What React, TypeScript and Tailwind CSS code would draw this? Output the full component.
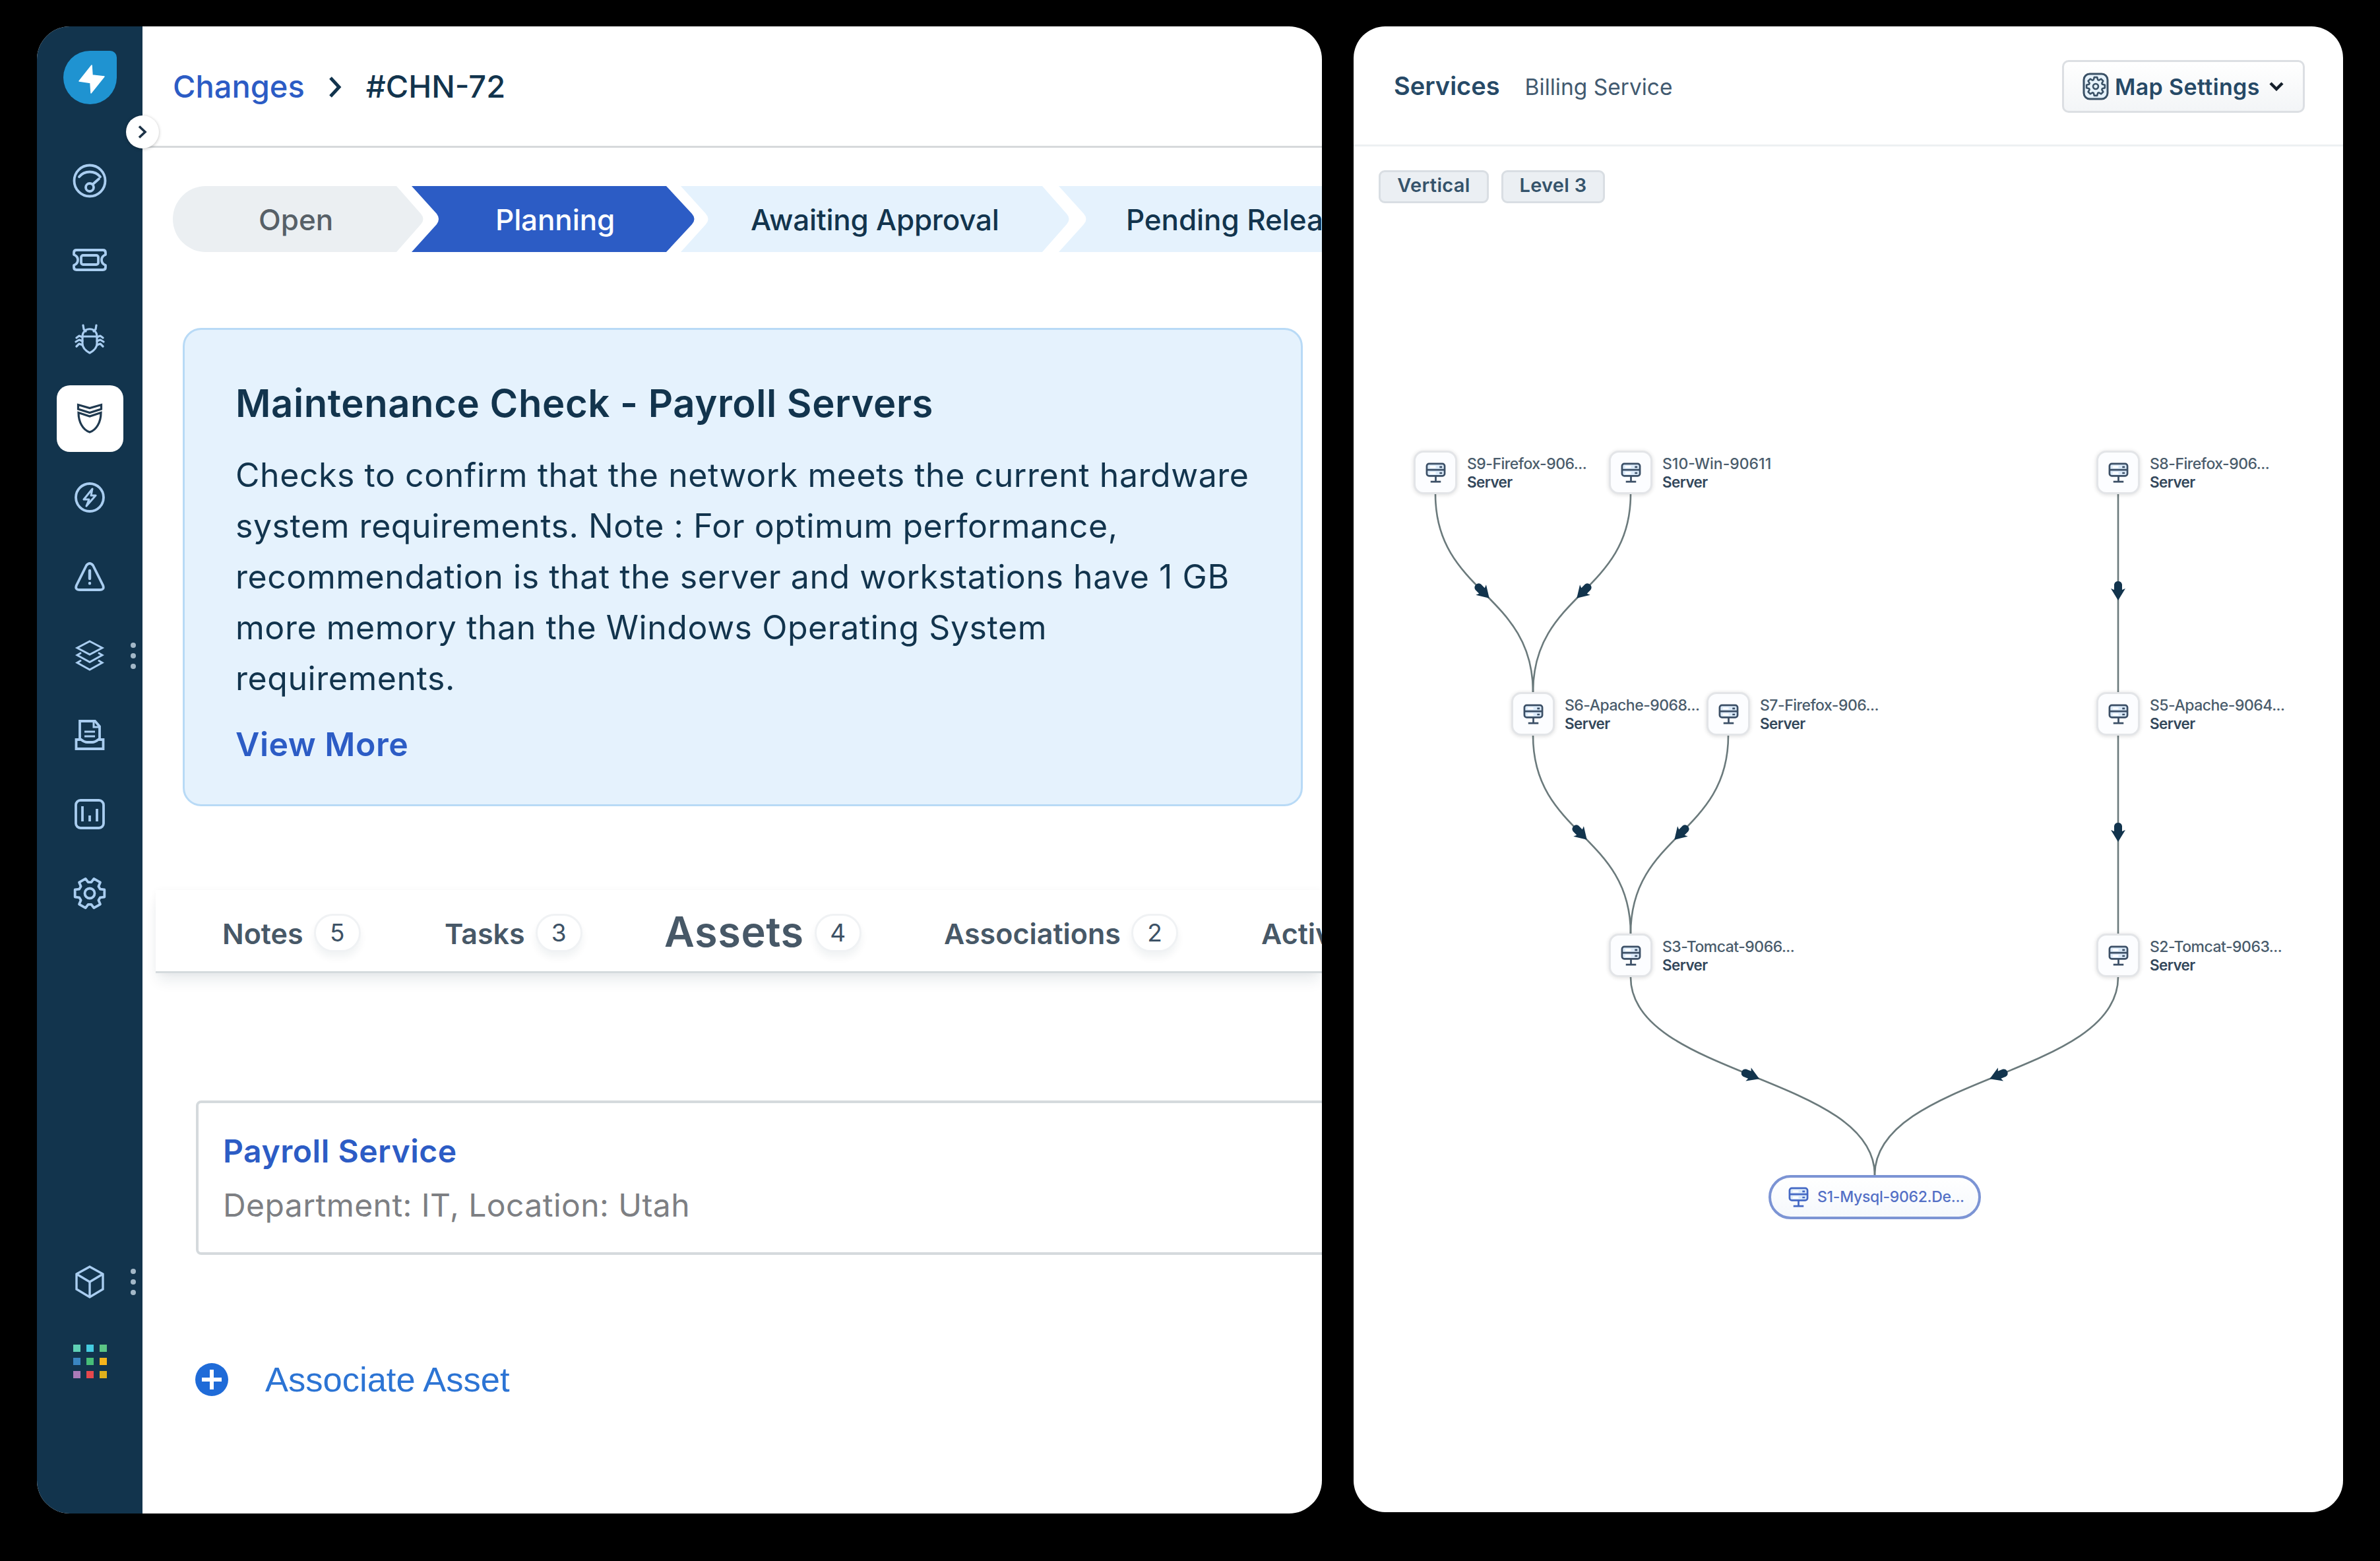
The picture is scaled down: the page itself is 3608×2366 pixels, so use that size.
// src/App.tsx

import React from 'react';

type IconProps = {
  children: React.ReactNode;
  size?: number;
  className?: string;
};

// All line icons are drawn around the origin of a 60x60 box
function Icon({ children, size = 60, className = 'stroke-[#a9cdf0]' }: IconProps) {
  return (
    <svg
      width={size}
      height={size}
      viewBox="-30 -30 60 60"
      fill="none"
      strokeWidth={3.8}
      strokeLinecap="round"
      strokeLinejoin="round"
      className={className}
    >
      {children}
    </svg>
  );
}

function gearPath(teeth: number, outer: number, inner: number, top: number, base: number) {
  const step = 360 / teeth;
  const point = (r: number, deg: number) => {
    const a = (deg * Math.PI) / 180;
    return `${(r * Math.cos(a)).toFixed(2)} ${(r * Math.sin(a)).toFixed(2)}`;
  };
  let d = '';
  for (let i = 0; i < teeth; i++) {
    const a = i * step;
    d += `${i === 0 ? 'M' : 'L'}${point(inner, a - base)}L${point(outer, a - top)}L${point(outer, a + top)}L${point(inner, a + base)}`;
  }
  return d + 'Z';
}

const navItems = [
  {
    name: 'dashboard',
    icon: (
      <>
        <circle r="23.5" />
        <path d="M-16 -6C-8 -16 8 -16 16 -6" />
        <circle cy="10" r="6" />
        <path d="M5 5L14 -3" />
      </>
    ),
  },
  {
    name: 'tickets',
    icon: (
      <>
        <path d="M-20 -15H20Q24 -15 24 -11V-8C16 -5 16 5 24 8V11Q24 15 20 15H-20Q-24 15 -24 11V8C-16 5 -16 -5 -24 -8V-11Q-24 -15 -20 -15Z" />
        <rect x="-13" y="-7" width="26" height="14" rx="3" />
      </>
    ),
  },
  {
    name: 'problems',
    icon: (
      <g strokeWidth="3.2">
        <path d="M-11 -4H11V7Q11 15 0 21Q-11 15 -11 7Z" />
        <path d="M-11 -4C-11 -19 11 -19 11 -4M-10 -21L-9 -15L-6 -12M10 -21L9 -15L6 -12" />
        <path d="M-11 -3L-16 -5L-20 -2M-11 3L-16 1L-21 4M-11 9L-16 7L-20 11" />
        <path d="M11 -3L16 -5L20 -2M11 3L16 1L21 4M11 9L16 7L20 11" />
      </g>
    ),
  },
  {
    name: 'changes',
    active: true,
    icon: (
      <g strokeWidth="3.2" strokeLinejoin="miter">
        <path d="M-17.5 -20.5L0 -15.5L17.5 -20.5V-14L0 -8.5L-17.5 -14Z" />
        <path d="M-17 -8.5L0 -3L17 -8.5C17 6 10 18 0 21C-10 18 -17 6 -17 -8.5Z" />
      </g>
    ),
  },
  {
    name: 'releases',
    icon: (
      <>
        <circle r="21" />
        <path d="M4 -13L-9 3H-1L-5 13L9 -3H2Z" strokeWidth="3" />
      </>
    ),
  },
  {
    name: 'alerts',
    icon: (
      <>
        <path d="M-5 -17Q0 -23 5 -17L20 13Q23 20 15 20H-15Q-23 20 -20 13Z" />
        <path d="M0 -9V3M0 10V10.2" strokeWidth="4.4" />
      </>
    ),
  },
  {
    name: 'assets',
    more: true,
    icon: (
      <g strokeWidth="3" strokeLinejoin="miter">
        <path d="M0 -22L19 -12L0 -2L-19 -12Z" />
        <path d="M-14 -4L-19 -1L0 9.5L19 -1L14 -4" />
        <path d="M-14 7.5L-19 10.5L0 21L19 10.5L14 7.5" />
      </g>
    ),
  },
  {
    name: 'purchase',
    icon: (
      <g strokeLinejoin="miter" strokeLinecap="butt">
        <path d="M-15 7V-21H8L15 -13V7" />
        <path d="M6 -21V-12H15" strokeWidth="3" />
        <path d="M-8 -5H8M-8 2H8" strokeWidth="3" />
        <path d="M-13 7H-20.5V21H20.5V7H13Q8 11 4 11H-4Q-8 11 -13 7Z" />
      </g>
    ),
  },
  {
    name: 'analytics',
    icon: (
      <>
        <rect x="-21" y="-21" width="42" height="42" rx="7" />
        <path d="M-11 -12V11M0 2V11M11 -8V11" strokeLinecap="butt" />
      </>
    ),
  },
  {
    name: 'admin',
    icon: (
      <>
        <path d={gearPath(6, 23, 17, 14, 22)} />
        <circle r="7.5" />
      </>
    ),
  },
];

const appColors = [
  'bg-[#5fd0b5]', 'bg-[#45cbe0]', 'bg-[#5cc585]',
  'bg-[#3a85c0]', 'bg-[#47bd78]', 'bg-[#f4b31b]',
  'bg-[#a97bb8]', 'bg-[#e5484d]', 'bg-[#dfb01c]',
];

function MoreDots() {
  return (
    <span className="absolute right-[10px] top-[40px] flex flex-col gap-[8px]">
      <i className="size-[8px] rounded-full bg-[#a3b8c8]" />
      <i className="size-[8px] rounded-full bg-[#a3b8c8]" />
      <i className="size-[8px] rounded-full bg-[#a3b8c8]" />
    </span>
  );
}

function Sidebar() {
  return (
    <aside className="flex w-[160px] shrink-0 flex-col items-center bg-[#12344d] pt-[37px]">
      <div className="size-[81px] rounded-[41px] rounded-tr-[10px] bg-[#1f93d1]">
        <svg viewBox="0 0 81 81" className="size-full fill-white">
          <path d="M43 22L24 46L41 48.5L42 64L62 39L44 37Z" stroke="#fff" strokeLinejoin="round" strokeWidth="1.5" />
        </svg>
      </div>
      <nav className="mt-[56px] flex w-full flex-col">
        {navItems.map((item) => (
          <a key={item.name} className="relative flex h-[120px] items-center justify-center">
            {item.active ? (
              <span className="flex size-[101px] items-center justify-center rounded-[20px] bg-white">
                <Icon className="stroke-[#203a50]">{item.icon}</Icon>
              </span>
            ) : (
              <Icon>{item.icon}</Icon>
            )}
            {item.more && <MoreDots />}
          </a>
        ))}
      </nav>
      <div className="relative mt-[469px] flex h-[120px] w-full items-center justify-center">
        <Icon>
          <path
            d="M0 -23L20 -12V11L0 23L-20 11V-12ZM-20 -12L0 0L20 -12M0 0V23"
            strokeWidth="3.4"
            strokeLinejoin="miter"
          />
        </Icon>
        <MoreDots />
      </div>
      <div className="flex h-[120px] items-center">
        <div className="grid grid-cols-3 gap-[9px]">
          {appColors.map((color) => (
            <i key={color} className={`size-[11px] ${color}`} />
          ))}
        </div>
      </div>
    </aside>
  );
}

function Stepper() {
  return (
    <div className="ml-[46px] mt-[58px] flex h-[100px] text-[44px] font-medium leading-[102px] whitespace-nowrap text-[#12344d]">
      <div className="w-[381px] shrink-0 bg-[#ebeff2] pl-[130px] text-[#576067] [clip-path:path('M50_0H339L376_42Q383_50_376_58L339_100H50A50_50_0_0_1_50_0Z')]">
        Open
      </div>
      <div className="-ml-[19px] w-[430px] shrink-0 bg-[#2c5cc5] pl-[127px] tracking-[-0.1px] text-white [clip-path:path('M0_0H386L425_42Q432_50_425_58L386_100H0L38_58Q44_50_38_42Z')]">
        Planning
      </div>
      <div className="-ml-[22px] w-[590px] shrink-0 bg-[#e5f2fd] pl-[106px] tracking-[-0.25px] [clip-path:path('M0_0H548L585_42Q592_50_585_58L548_100H0L38_58Q45_50_38_42Z')]">
        Awaiting Approval
      </div>
      <div className="-ml-[17px] w-[590px] shrink-0 bg-[#e5f2fd] pl-[102px] tracking-[-0.1px] [clip-path:path('M0_0H590V100H0L38_58Q45_50_38_42Z')]">
        Pending Release
      </div>
    </div>
  );
}

type TabProps = {
  label: string;
  count?: number;
  className: string;
  active?: boolean;
};

function Tab({ label, count, className, active }: TabProps) {
  return (
    <div className={`flex shrink-0 items-center gap-[16px] text-[#475867] ${className}`}>
      <span
        className={
          active
            ? 'pb-[3px] text-[63px] font-semibold leading-[67px] tracking-[0.6px]'
            : 'pt-[3px] text-[43px] font-semibold leading-[60px]'
        }
      >
        {label}
      </span>
      {count !== undefined && (
        <span className="flex h-[58px] w-[71px] items-center justify-center rounded-full border-[3px] border-[#f0f2f4] bg-white text-[37px] text-[#3d5266] shadow-[0_8px_12px_rgba(24,50,71,0.06)]">
          {count}
        </span>
      )}
    </div>
  );
}

function ChangePanel() {
  return (
    <section className="relative flex h-[2254px] w-[1948px] shrink-0 overflow-hidden rounded-[50px] bg-white">
      <Sidebar />
      <main className="w-[1788px] shrink-0 overflow-hidden">
        <header className="flex h-[184px] items-center border-b-[3px] border-[#d6d9db] pl-[46px] pt-[2px] text-[47px] font-medium">
          <a className="text-[#2c5cc5]">Changes</a>
          <svg viewBox="0 0 20 32" className="ml-[36px] mr-[37px] h-[32px] w-[20px]" fill="none" stroke="#12344d" strokeWidth="5">
            <path d="M3 2L16 16L3 30" />
          </svg>
          <span className="text-[#12344d]">#CHN-72</span>
        </header>

        <Stepper />

        <article className="ml-[61px] mt-[115px] h-[725px] w-[1698px] rounded-[28px] border-[3px] border-[#b8daf6] bg-[#e5f2fd] pl-[77px] pt-[71px] text-[#12344d]">
          <h1 className="text-[58px] font-semibold leading-[80px] tracking-[0.58px]">Maintenance Check - Payroll Servers</h1>
          <p className="mt-[31px] text-[50px] leading-[77px] tracking-[0.55px] whitespace-nowrap">
            Checks to confirm that the network meets the current hardware<br />
            system requirements. Note : For optimum performance,<br />
            recommendation is that the server and workstations have 1 GB<br />
            more memory than the Windows Operating System<br />
            requirements.
          </p>
          <a className="mt-[31px] block text-[50px] font-semibold leading-[60px] tracking-[0.5px] text-[#2c5cc5]">View More</a>
        </article>

        <div className="ml-[20px] mt-[127px] flex h-[126px] items-center border-b-[3px] border-[#d5dadd] bg-white pl-[101px] pt-[6px] whitespace-nowrap shadow-[0_14px_20px_-4px_rgba(24,50,71,0.1),0_0_10px_rgba(24,50,71,0.03)]">
          <Tab label="Notes" count={5} className="w-[337px]" />
          <Tab label="Tasks" count={3} className="w-[333px]" />
          <Tab label="Assets" count={4} className="w-[424px]" active />
          <Tab label="Associations" count={2} className="w-[481px]" />
          <Tab label="Activities" className="w-[300px]" />
        </div>

        <div className="ml-[81px] mt-[193px] h-[234px] w-[1900px] rounded-[8px] border-[4px] border-[#d5dadd] pl-[37px] pt-[43px]">
          <div className="text-[48px] font-semibold leading-[60px] tracking-[0.55px] text-[#2c5cc5]">Payroll Service</div>
          <div className="mt-[22px] text-[48px] leading-[60px] tracking-[0.45px] text-[#7d7f83]">Department: IT, Location: Utah</div>
        </div>

        <button className="ml-[80px] mt-[164px] flex items-center gap-[56px]">
          <svg viewBox="0 0 50 50" className="size-[50px]">
            <circle cx="25" cy="25" r="25" fill="#1f6bd8" />
            <path d="M25 10V40M10 25H40" stroke="#fff" strokeWidth="6" />
          </svg>
          <span className="font-['Liberation_Sans',Arial,sans-serif] text-[52.5px] leading-[50px] text-[#2c74d4]">Associate Asset</span>
        </button>
      </main>

      {/* sidebar toggle sits over the sidebar edge */}
      <button className="absolute left-[135px] top-[135px] flex size-[50px] items-center justify-center rounded-full bg-white shadow-[0_1px_5px_rgba(0,0,0,0.25)]">
        <svg viewBox="0 0 14 20" className="h-[20px] w-[14px]" fill="none" stroke="#1d3347" strokeWidth="3.6">
          <path d="M2 1.5L11 10L2 18.5" />
        </svg>
      </button>
    </section>
  );
}

type ServerNode = { id: string; x: number; y: number; label: string };

// coordinates are relative to the map canvas
const nodes: ServerNode[] = [
  { id: 'S9', x: 124, y: 408, label: 'S9-Firefox-906...' },
  { id: 'S10', x: 420, y: 408, label: 'S10-Win-90611' },
  { id: 'S8', x: 1159, y: 408, label: 'S8-Firefox-906...' },
  { id: 'S6', x: 272, y: 774, label: 'S6-Apache-9068...' },
  { id: 'S7', x: 568, y: 774, label: 'S7-Firefox-906...' },
  { id: 'S5', x: 1159, y: 774, label: 'S5-Apache-9064...' },
  { id: 'S3', x: 420, y: 1140, label: 'S3-Tomcat-9066...' },
  { id: 'S2', x: 1159, y: 1140, label: 'S2-Tomcat-9063...' },
];

const edges = [
  [124, 408, 272],
  [420, 408, 272],
  [1159, 408, 1159],
  [272, 774, 420],
  [568, 774, 420],
  [1159, 774, 1159],
  [420, 1140, 790],
  [1159, 1140, 790],
];

function ServerIcon({ color, className }: { color: string; className: string }) {
  return (
    <svg viewBox="0 0 32 32" className={className} fill="none" stroke={color} strokeWidth="2.8">
      <rect x="2" y="2" width="28" height="19" rx="3.5" fill="#dcebfa" />
      <path d="M2 11.5H30M16 21V30M8 30H24" />
      <path d="M7 7H16M7 16.5H16" stroke="#fff" strokeWidth="3" />
      <path d="M22 7H26M22 16.5H26" />
    </svg>
  );
}

function Edge({ x1, y, x2 }: { x1: number; y: number; x2: number }) {
  const y1 = y + 33;
  const y2 = y + 333;
  const mid = (y1 + y2) / 2;
  const angle = (Math.atan2(mid - y1, x2 - x1) * 180) / Math.PI;
  return (
    <g>
      <path d={`M${x1} ${y1}C${x1} ${mid} ${x2} ${mid} ${x2} ${y2}`} fill="none" stroke="#6b7a7c" strokeWidth="2.6" />
      <path
        d="M11 0L-7 11L-5 6H-13Q-18 5 -18 0Q-18 -5 -13 -6H-5L-7 -11Z"
        fill="#12344d"
        transform={`translate(${(x1 + x2) / 2} ${mid}) rotate(${angle})`}
      />
    </g>
  );
}

function NodeItem({ node }: { node: ServerNode }) {
  const truncated = node.label.endsWith('...');
  return (
    <div className="absolute flex gap-[15px]" style={{ left: node.x - 33, top: node.y - 33 }}>
      <div className="flex size-[66px] items-center justify-center rounded-[15px] border-[3px] border-[#e3e5e8] bg-[#fcfdff] shadow-[0_1px_6px_rgba(0,0,0,0.14)]">
        <ServerIcon color="#3b4f66" className="size-[31px]" />
      </div>
      <div className="pt-[6px] text-[23px] font-medium leading-[28px] whitespace-nowrap text-[#4a5c6c]">
        <div className={truncated ? 'tracking-[-0.5px]' : ''}>{node.label}</div>
        <div className="text-[22.5px] font-semibold tracking-[-0.6px] text-[#33475b]">Server</div>
      </div>
    </div>
  );
}

function MapPanel() {
  return (
    <section className="flex h-[2252px] w-[1500px] shrink-0 flex-col overflow-hidden rounded-[48px] bg-white">
      <header className="flex h-[182px] shrink-0 items-center border-b-[3px] border-[#edf0f2] pl-[61px] pr-[58px] pt-[2px]">
        <span className="text-[38px] font-semibold text-[#264966]">Services</span>
        <span className="ml-[38px] pt-[4px] text-[33.5px] text-[#425a70]">Billing Service</span>
        <button className="ml-auto flex h-[80px] w-[368px] items-center rounded-[10px] border-[3px] border-[#dcdfe3] bg-linear-to-b from-white to-[#f3f5f7] pl-[28px] whitespace-nowrap">
          <svg viewBox="-20 -21 40 42" className="h-[42px] w-[40px]" fill="none" stroke="#3a5166" strokeWidth="3" strokeLinejoin="round">
            <rect x="-18" y="-19" width="36" height="38" rx="9" fill="#e6f2fb" />
            <path d={gearPath(8, 14, 10.5, 9, 18)} strokeWidth="2.6" />
            <circle r="4" strokeWidth="2.6" />
          </svg>
          <span className="ml-[9px] pt-[2px] text-[34px] font-semibold tracking-[0.35px] text-[#264966]">Map Settings</span>
          <svg viewBox="0 0 22 14" className="ml-[14px] h-[14px] w-[22px]" fill="none" stroke="#15202b" strokeWidth="4.5">
            <path d="M2 2L11 11L20 2" />
          </svg>
        </button>
      </header>

      <div className="mt-[36px] flex shrink-0 gap-[19px] pl-[38px] text-[29px] font-semibold tracking-[0.3px] text-[#35536b]">
        <span className="flex h-[50px] w-[167px] items-center justify-center rounded-[9px] border-[3px] border-[#d9dee3] bg-[#ebeff3] pb-[5px]">Vertical</span>
        <span className="flex h-[50px] w-[157px] items-center justify-center rounded-[9px] border-[3px] border-[#d9dee3] bg-[#ebeff3] pb-[5px]">Level 3</span>
      </div>

      <div className="relative flex-1">
        <svg viewBox="0 0 1500 1982" className="absolute left-0 top-0 h-[1982px] w-[1500px]">
          {edges.map(([x1, y, x2]) => (
            <Edge key={`${x1}-${y}`} x1={x1} y={y} x2={x2} />
          ))}
        </svg>
        {nodes.map((node) => (
          <NodeItem key={node.id} node={node} />
        ))}
        <div className="absolute left-[629px] top-[1473px] flex h-[67px] w-[322px] items-center rounded-full border-[4px] border-[#7c94d4] bg-linear-to-b from-white to-[#f5f8fc] pl-[26px] text-[23px] font-medium tracking-[-0.3px] whitespace-nowrap text-[#5470c6]">
          <ServerIcon color="#4468c4" className="mr-[13px] size-[31px]" />
          S1-Mysql-9062.De...
        </div>
      </div>
    </section>
  );
}

export default function App() {
  return (
    <div className="flex h-[2366px] w-[3608px] gap-[48px] overflow-hidden bg-black pl-[56px] pt-[40px] font-['Inter',sans-serif]">
      <ChangePanel />
      <MapPanel />
    </div>
  );
}
